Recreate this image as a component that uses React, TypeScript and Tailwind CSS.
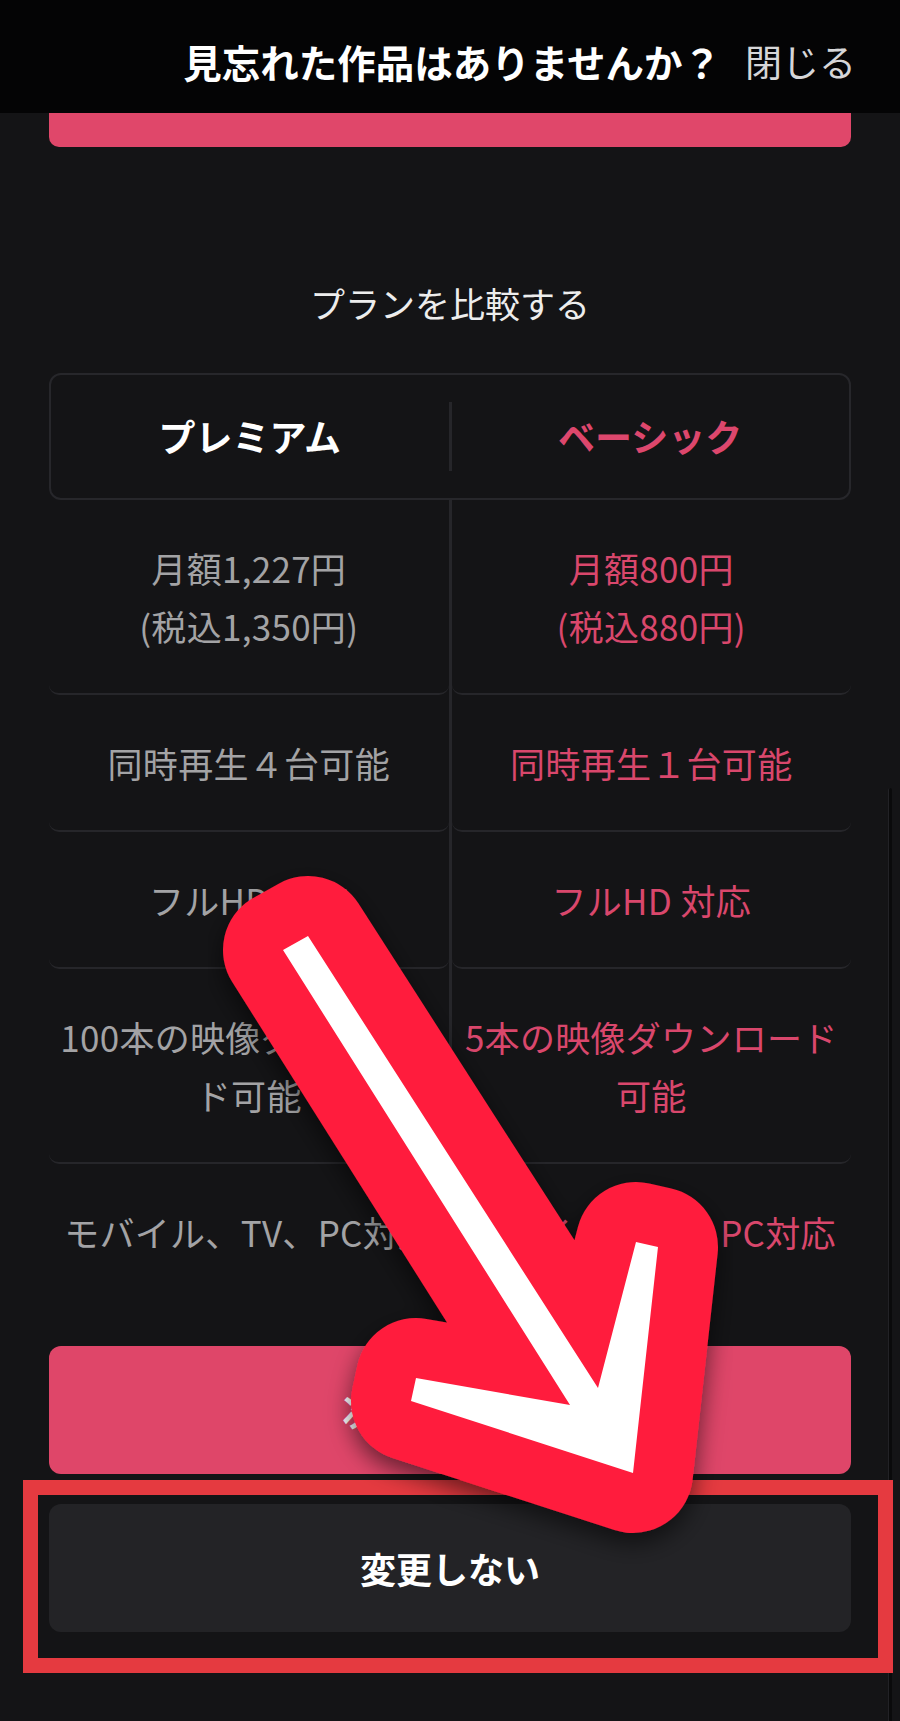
import React from "react";

const rows: { left: string[]; right: string[] }[] = [
  { left: ["月額1,227円", "(税込1,350円)"], right: ["月額800円", "(税込880円)"] },
  { left: ["同時再生４台可能"], right: ["同時再生１台可能"] },
  { left: ["フルHD 対応"], right: ["フルHD 対応"] },
  { left: ["100本の映像ダウンロード可能"], right: ["5本の映像ダウンロード可能"] },
  { left: ["モバイル、TV、PC対応"], right: ["モバイル、TV、PC対応"] },
];

function Cell({ lines, tone, last }: { lines: string[]; tone: "gray" | "pink"; last: boolean }) {
  return (
    <div
      className={
        "px-[8px] pt-[39px] pb-[38px] text-center text-[35px] leading-[58px] tracking-[0.3px] " +
        (last ? "border-b-2 border-transparent " : "border-b-2 border-[#26262a] rounded-b-[10px] ") +
        (tone === "gray" ? "text-[#a3a3a5]" : "text-[#d9476c]")
      }
    >
      {lines.map((l, i) => (
        <div key={i}>{l}</div>
      ))}
    </div>
  );
}

export default function App() {
  const pts = "283,950 308,936 598,1388 636,1242 658,1247 633,1473 411,1401 416,1378 570,1405";
  return (
    <div className="relative w-[900px] min-h-[1721px] bg-[#141416] font-['Noto_Sans_CJK_JP',sans-serif] overflow-hidden">
      {/* header */}
      <div className="h-[113px] bg-[#040405] flex items-center justify-end pr-[44px] pt-[10px] gap-[24px]">
        <span className="text-[38.5px] font-bold text-white">見忘れた作品はありませんか？</span>
        <span className="text-[37px] text-[#d6d6d8]">閉じる</span>
      </div>

      <div className="px-[49px] pb-[88px]">
        <div className="h-[34px] rounded-b-[10px] bg-[#e0476a]" />

        <div className="mt-[131px] text-center text-[35px] leading-[50px] text-[#ededed]">プランを比較する</div>

        <div className="mt-[45px] h-[127px] rounded-[12px] border-2 border-[#27272b] flex items-center">
          <div className="flex-1 text-center text-[37px] font-bold text-white">プレミアム</div>
          <div className="w-[3px] h-[69px] bg-[#26262a]" />
          <div className="flex-1 text-center text-[37px] font-bold text-[#dd476d]">ベーシック</div>
        </div>

        <div className="flex">
          <div className="flex-1 min-w-0">
            {rows.map((r, i) => (
              <Cell key={i} lines={r.left} tone="gray" last={i === rows.length - 1} />
            ))}
          </div>
          <div className="w-[3px] bg-[#26262a]" />
          <div className="flex-1 min-w-0">
            {rows.map((r, i) => (
              <Cell key={i} lines={r.right} tone="pink" last={i === rows.length - 1} />
            ))}
          </div>
        </div>

        <div className="mt-[45px] h-[128px] rounded-[12px] bg-[#df4669] flex items-center justify-center text-[36px] font-bold text-white">
          次のページへ
        </div>

        <div className="mt-[30px] h-[128px] rounded-[12px] bg-[#232326] flex items-center justify-center text-[36px] font-bold text-white">
          変更しない
        </div>
      </div>

      {/* scroll indicator */}
      <div className="absolute right-[8px] top-[788px] bottom-0 w-[4px] rounded-t-full bg-[#0a0a0b] border-l border-[#222226]" />

      {/* annotation box */}
      <div className="absolute left-[23px] top-[1480px] w-[870px] h-[193px] border-[15px] border-[#e53a40]" />

      {/* annotation arrow */}
      <svg className="absolute left-0 top-0 pointer-events-none" width="900" height="1721" viewBox="0 0 900 1721">
        <defs>
          <filter id="sh" x="-20%" y="-20%" width="140%" height="140%">
            <feDropShadow dx="0" dy="10" stdDeviation="12" floodColor="#000" floodOpacity="0.55" />
          </filter>
        </defs>
        <polygon points={pts} fill="#ff1d3d" stroke="#ff1d3d" strokeWidth="120" strokeLinejoin="round" filter="url(#sh)" />
        <polygon points={pts} fill="#ffffff" />
      </svg>
    </div>
  );
}
